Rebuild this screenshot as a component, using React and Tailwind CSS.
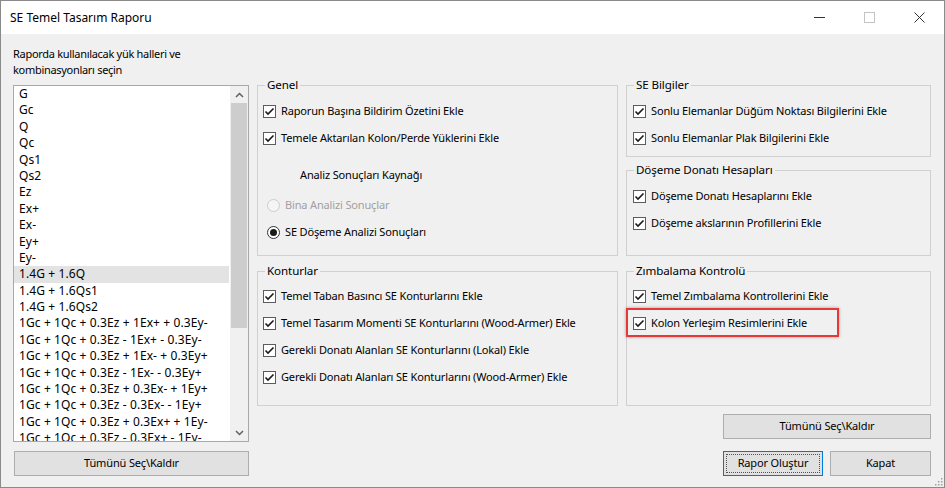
import React from "react";

const items = [
  "G", "Gc", "Q", "Qc", "Qs1", "Qs2", "Ez", "Ex+", "Ex-", "Ey+", "Ey-",
  "1.4G + 1.6Q", "1.4G + 1.6Qs1", "1.4G + 1.6Qs2",
  "1Gc + 1Qc + 0.3Ez + 1Ex+ + 0.3Ey-",
  "1Gc + 1Qc + 0.3Ez - 1Ex+ - 0.3Ey-",
  "1Gc + 1Qc + 0.3Ez + 1Ex- + 0.3Ey+",
  "1Gc + 1Qc + 0.3Ez - 1Ex- - 0.3Ey+",
  "1Gc + 1Qc + 0.3Ez + 0.3Ex- + 1Ey+",
  "1Gc + 1Qc + 0.3Ez - 0.3Ex- - 1Ey+",
  "1Gc + 1Qc + 0.3Ez + 0.3Ex+ + 1Ey-",
  "1Gc + 1Qc + 0.3Ez - 0.3Ex+ - 1Ey-",
];

function Check({ label }) {
  return (
    <div className="h-[27px] flex items-center gap-[5px]">
      <span className="w-[13px] h-[13px] border border-[#5c5c5c] bg-white flex items-center justify-center shrink-0">
        <svg width="11" height="11" viewBox="0 0 11 11">
          <polyline points="1.5,5.5 4,8 9.5,2.5" fill="none" stroke="#1a1a1a" strokeWidth="1.6" />
        </svg>
      </span>
      <span className="whitespace-nowrap">{label}</span>
    </div>
  );
}

function Radio({ label, checked, disabled }) {
  return (
    <div className="h-[27px] flex items-center gap-[5px] ml-[4px]">
      <span
        className={
          "w-[13px] h-[13px] rounded-full border flex items-center justify-center shrink-0 " +
          (disabled ? "border-[#cccccc] bg-[#f5f5f5]" : "border-[#333] bg-white")
        }
      >
        {checked && <span className="w-[7px] h-[7px] rounded-full bg-[#1a1a1a]" />}
      </span>
      <span className={disabled ? "text-[#a0a0a0] whitespace-nowrap" : "whitespace-nowrap"}>{label}</span>
    </div>
  );
}

function Group({ title, className, children, padClass }) {
  return (
    <fieldset className={"border border-[#d0d0d0] " + className}>
      <legend className="ml-[7px] px-[2px] leading-[16px] text-[11.6px] tracking-[-0.1px]">{title}</legend>
      <div className={padClass}>{children}</div>
    </fieldset>
  );
}

function Button({ children, className }) {
  return (
    <button className={"h-[25px] bg-[#e1e1e1] border border-[#adadad] flex items-center justify-center " + className}>
      {children}
    </button>
  );
}

export default function App() {
  return (
    <div
      className="relative w-[945px] h-[488px] border border-[#8a8a8a] bg-[#f0f0f0] flex flex-col text-[11px] tracking-[-0.15px] text-black overflow-hidden"
      style={{ fontFamily: '"Noto Sans", "Open Sans", sans-serif' }}
    >
      {/* Title bar */}
      <div className="h-[33px] bg-white flex items-center shrink-0">
        <div className="pl-[9px] flex-1 text-[12px] tracking-normal">SE Temel Tasarım Raporu</div>
        <div className="flex h-full">
          <div className="w-[50px] flex items-center justify-center">
            <svg width="11" height="11" viewBox="0 0 11 11"><line x1="0" y1="5.5" x2="11" y2="5.5" stroke="#333" strokeWidth="1" /></svg>
          </div>
          <div className="w-[50px] flex items-center justify-center">
            <svg width="11" height="11" viewBox="0 0 11 11"><rect x="0.5" y="0.5" width="10" height="10" fill="none" stroke="#c4c4c4" strokeWidth="1" /></svg>
          </div>
          <div className="w-[50px] flex items-center justify-center">
            <svg width="11" height="11" viewBox="0 0 11 11">
              <line x1="0.5" y1="0.5" x2="10.5" y2="10.5" stroke="#333" strokeWidth="1" />
              <line x1="10.5" y1="0.5" x2="0.5" y2="10.5" stroke="#333" strokeWidth="1" />
            </svg>
          </div>
        </div>
      </div>

      {/* Body */}
      <div className="flex-1 flex pl-[12px] gap-[8px]">
        {/* Left column */}
        <div className="w-[236px] flex flex-col pt-[12px]">
          <div className="leading-[16px] text-[11px] tracking-[-0.3px]">
            Raporda kullanılacak yük halleri ve
            <br />
            kombinasyonları seçin
          </div>
          <div className="mt-[7px] h-[357px] border border-[#a9a9a9] bg-white flex">
            <div className="flex-1 overflow-hidden text-[12px] tracking-[0.1px]">
              {items.map((t, i) => (
                <div
                  key={i}
                  className={
                    "h-[16.4px] leading-[16.4px] pl-[5px] whitespace-nowrap " +
                    (i === 11 ? "bg-[#e3e3e3] mr-[1px]" : "")
                  }
                >
                  {t}
                </div>
              ))}
            </div>
            <div className="w-[18px] bg-[#f0f0f0] flex flex-col">
              <div className="h-[17px] flex items-center justify-center">
                <svg width="9" height="6" viewBox="0 0 9 6"><polyline points="1,5 4.5,1.5 8,5" fill="none" stroke="#606060" strokeWidth="1.5" /></svg>
              </div>
              <div className="h-[225px] bg-[#cdcdcd] mx-[1px]" />
              <div className="flex-1" />
              <div className="h-[17px] flex items-center justify-center">
                <svg width="9" height="6" viewBox="0 0 9 6"><polyline points="1,1 4.5,4.5 8,1" fill="none" stroke="#606060" strokeWidth="1.5" /></svg>
              </div>
            </div>
          </div>
          <Button className="mt-[9px] w-[235px] ml-[1px]">Tümünü Seç\Kaldır</Button>
        </div>

        {/* Middle column */}
        <div className="w-[361px] flex flex-col pt-[43px]">
          <Group title="Genel" className="h-[179px]" padClass="pl-[5px] pt-[5px]">
            <Check label="Raporun Başına Bildirim Özetini Ekle" />
            <Check label="Temele Aktarılan Kolon/Perde Yüklerini Ekle" />
            <div className="mt-[10px] h-[27px] flex items-center ml-[37px]">Analiz Sonuçları Kaynağı</div>
            <div className="mt-[3px]">
              <Radio label="Bina Analizi Sonuçlar" disabled />
              <Radio label="SE Döşeme Analizi Sonuçları" checked />
            </div>
          </Group>
          <Group title="Konturlar" className="h-[143px] mt-[7px]" padClass="pl-[5px] pt-[4px]">
            <Check label="Temel Taban Basıncı SE Konturlarını Ekle" />
            <Check label="Temel Tasarım Momenti SE Konturlarını (Wood-Armer) Ekle" />
            <Check label="Gerekli Donatı Alanları SE Konturlarını (Lokal) Ekle" />
            <Check label="Gerekli Donatı Alanları SE Konturlarını (Wood-Armer) Ekle" />
          </Group>
        </div>

        {/* Right column */}
        <div className="w-[305px] flex flex-col pt-[43px]">
          <Group title="SE Bilgiler" className="h-[80px]" padClass="pl-[6px] pt-[5px]">
            <Check label="Sonlu Elemanlar Düğüm Noktası Bilgilerini Ekle" />
            <Check label="Sonlu Elemanlar Plak Bilgilerini Ekle" />
          </Group>
          <Group title="Döşeme Donatı Hesapları" className="h-[94px] mt-[5px]" padClass="pl-[6px] pt-[5px]">
            <Check label="Döşeme Donatı Hesaplarını Ekle" />
            <Check label="Döşeme akslarının Profillerini Ekle" />
          </Group>
          <Group title="Zımbalama Kontrolü" className="h-[143px] mt-[7px]" padClass="pl-[6px] pt-[4px]">
            <Check label="Temel Zımbalama Kontrollerini Ekle" />
            <div className="relative">
              <Check label="Kolon Yerleşim Resimlerini Ekle" />
              <div className="absolute left-[-7px] top-[-2px] w-[213px] h-[29px] border-2 border-[#e53935] shadow-[0_0_3px_rgba(0,0,0,0.35)] pointer-events-none" />
            </div>
          </Group>
          <div className="flex justify-end mt-[8px]">
            <Button className="w-[208px]">Tümünü Seç\Kaldır</Button>
          </div>
          <div className="flex justify-end gap-[7px] mt-[12px]">
            <button className="h-[25px] w-[100px] bg-[#e1e1e1] border border-[#0078d7] flex items-center justify-center outline-1 outline-dotted outline-[#555] outline-offset-[-4px]">
              Rapor Oluştur
            </button>
            <Button className="w-[101px]">Kapat</Button>
          </div>
        </div>
      </div>

      {/* Resize grip */}
      <svg className="absolute right-[1px] bottom-[1px]" width="10" height="10" viewBox="0 0 10 10">
        {[[8, 8], [8, 5], [5, 8], [8, 2], [5, 5], [2, 8]].map(([x, y], i) => (
          <rect key={i} x={x} y={y} width="1.5" height="1.5" fill="#a0a0a0" />
        ))}
      </svg>
    </div>
  );
}
